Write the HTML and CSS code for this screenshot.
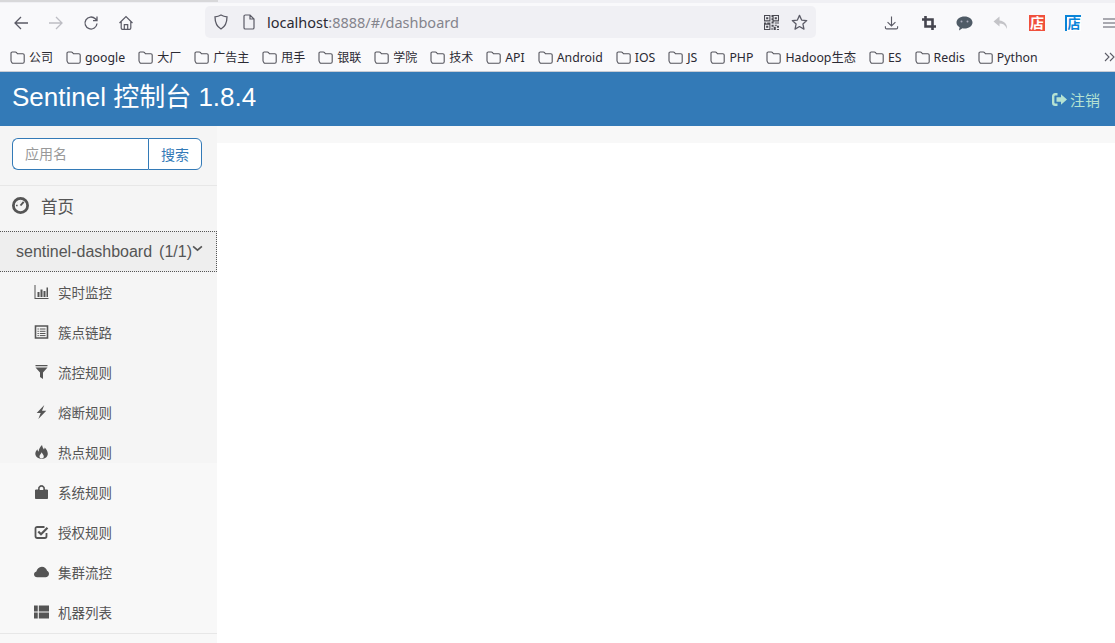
FILE: index.html
```html
<!DOCTYPE html>
<html lang="zh">
<head>
<meta charset="utf-8">
<title>Sentinel Dashboard</title>
<link rel="stylesheet" href="styles.css">
</head>
<body>
<svg class="defs" width="0" height="0" aria-hidden="true">
  <symbol id="folder" viewBox="0 0 15 13"><path d="M1 3V2.200C1 1.500 1.500 1 2.200 1h3.200c.4 0 .7.2 1 .5l1 1.200h5.400c.8 0 1.400.6 1.400 1.400v6.700c0 .8-.6 1.400-1.400 1.400H2.400C1.600 11.200 1 10.600 1 9.800z" fill="none" stroke="#54545c" stroke-width="1.100"/></symbol>
</svg>
<div class="browser">
  <div class="topstrip"><div class="tabshadow"></div></div>
  <div class="toolbar">
    <div class="nav-buttons">
      <svg class="tb-icon" viewBox="0 0 16 16"><path d="M15 8H2M8 2 2 8l6 6" fill="none" stroke="#5b5b66" stroke-width="1.300"/></svg>
      <svg class="tb-icon" viewBox="0 0 16 16"><path d="M1 8h13M8 2l6 6-6 6" fill="none" stroke="#bdbdc3" stroke-width="1.300"/></svg>
      <svg class="tb-icon" viewBox="0 0 16 16"><path d="M14 8.500A6 6 0 1 1 12.300 3.800L14 5.500M14 1.500V5.600H10" fill="none" stroke="#5b5b66" stroke-width="1.300"/></svg>
      <svg class="tb-icon" viewBox="0 0 16 16"><path d="M1.500 8 8 1.600 14.500 8M3.200 6.800V13c0 .8.500 1.300 1.300 1.300h7c.8 0 1.300-.5 1.300-1.300V6.800M6.300 14.200V9.700h3.400v4.500" fill="none" stroke="#5b5b66" stroke-width="1.200"/></svg>
    </div>
    <div class="urlbar">
      <svg class="url-shield" viewBox="0 0 16 16"><path d="M8 1c2 1.200 4 1.700 6 1.800 0 5.700-1.600 9.800-6 12.200C3.600 12.600 2 8.500 2 2.800 4 2.700 6 2.200 8 1z" fill="none" stroke="#5b5b66" stroke-width="1.300"/></svg>
      <svg class="url-page" viewBox="0 0 14 16"><path d="M2 2.300C2 1.600 2.600 1 3.300 1H8l4 4v8.700c0 .7-.6 1.300-1.300 1.300H3.300C2.600 15 2 14.400 2 13.700zM8 1v4h4" fill="none" stroke="#5b5b66" stroke-width="1.200"/></svg>
      <div class="url-text">localhost<span class="url-dim">:8888/#/dashboard</span></div>
      <svg class="url-qr" viewBox="0 0 14 14"><path d="M0 0h6v6H0zM1 1v4h4V1zM8 0h6v6H8zM9 1v4h4V1zM0 8h6v6H0zM1 9v4h4V9zM2 2h2v2H2zM10 2h2v2h-2zM2 10h2v2H2zM7 0h1v2H7zM7 3h1v2H7zM0 7h2v1H0zM3 7h3v1H3zM7 6h2v2H7zM10 7h4v1h-4zM7 9h2v2H7zM10 9h2v1h-2zM12 10h2v2h-2zM9 11h2v3H9zM7 12h1v2H7zM12 13h2v1h-2z" fill="#4a4a52" fill-rule="evenodd"/></svg>
      <svg class="url-star" viewBox="0 0 16 16"><path d="m8 1.300 2 4.400 4.800.5-3.600 3.200 1 4.800L8 11.800l-4.200 2.400 1-4.800L1.200 6.200 6 5.700z" fill="none" stroke="#5b5b66" stroke-width="1.200" stroke-linejoin="round"/></svg>
    </div>
    <div class="ext-buttons">
      <svg class="ext dl" viewBox="0 0 16 16"><path d="M8 1v10M3.800 7 8 11.200 12.200 7M1.500 11.500V13c0 .8.500 1.300 1.300 1.300h10.400c.8 0 1.300-.5 1.300-1.300v-1.500" fill="none" stroke="#5b5b66" stroke-width="1.200"/></svg>
      <svg class="ext crop" viewBox="0 0 14 14"><path d="M3.500 0v10.500H14M0 3.500h10.500V14" fill="none" stroke="#45454f" stroke-width="2.600"/></svg>
      <svg class="ext chat" viewBox="0 0 17 15"><path d="M8.500 0.500c4.500 0 8 2.600 8 6s-3.500 6-8 6c-.7 0-1.400-.1-2-.2L3 14.500l.6-3.300C1.600 10.100.5 8.400.5 6.500c0-3.400 3.500-6 8-6z" fill="#4f5b66"/><circle cx="5.500" cy="5.500" r="1" fill="#aab"/><circle cx="11.500" cy="5.500" r="1" fill="#aab"/></svg>
      <svg class="ext back" viewBox="0 0 15 14"><path d="M6.500 0.500.5 5.500l6 5V7.500c3 0 5 1 6.500 3.500l1 2c.5-4.500-2.500-8-7.500-8.500z" fill="#c4c4c8"/></svg>
      <div class="ext shop red">店</div>
      <div class="ext shop blue">店</div>
      <svg class="ext menu" viewBox="0 0 12 10"><path d="M0 1h12M0 5h12M0 9h12" stroke="#5b5b66" stroke-width="1.100"/></svg>
    </div>
  </div>
  <div class="bookmarks">
    <div class="bm zh"><svg class="bm-icon"><use href="#folder"/></svg>公司</div>
    <div class="bm"><svg class="bm-icon"><use href="#folder"/></svg>google</div>
    <div class="bm zh"><svg class="bm-icon"><use href="#folder"/></svg>大厂</div>
    <div class="bm zh"><svg class="bm-icon"><use href="#folder"/></svg>广告主</div>
    <div class="bm zh"><svg class="bm-icon"><use href="#folder"/></svg>甩手</div>
    <div class="bm zh"><svg class="bm-icon"><use href="#folder"/></svg>银联</div>
    <div class="bm zh"><svg class="bm-icon"><use href="#folder"/></svg>学院</div>
    <div class="bm zh"><svg class="bm-icon"><use href="#folder"/></svg>技术</div>
    <div class="bm"><svg class="bm-icon"><use href="#folder"/></svg>API</div>
    <div class="bm"><svg class="bm-icon"><use href="#folder"/></svg>Android</div>
    <div class="bm"><svg class="bm-icon"><use href="#folder"/></svg>IOS</div>
    <div class="bm"><svg class="bm-icon"><use href="#folder"/></svg>JS</div>
    <div class="bm"><svg class="bm-icon"><use href="#folder"/></svg>PHP</div>
    <div class="bm"><svg class="bm-icon"><use href="#folder"/></svg>Hadoop生态</div>
    <div class="bm"><svg class="bm-icon"><use href="#folder"/></svg>ES</div>
    <div class="bm"><svg class="bm-icon"><use href="#folder"/></svg>Redis</div>
    <div class="bm"><svg class="bm-icon"><use href="#folder"/></svg>Python</div>
    <svg class="bm-more" viewBox="0 0 11 10"><path d="M1 1l4 4-4 4M6 1l4 4-4 4" fill="none" stroke="#5b5b66" stroke-width="1.100"/></svg>
  </div>
</div>
<header class="navbar">
  <div class="brand">Sentinel 控制台 1.8.4</div>
  <a class="logout">
    <svg class="logout-icon" viewBox="0 0 15 13"><path d="M5.500 1.200H3.200C2 1.200 1.200 2 1.200 3.200v6.600c0 1.200.8 2 2 2h2.300" fill="none" stroke="#b5e2d2" stroke-width="2.400"/><path d="M4.500 4.300H9V1.200L15 6.500 9 11.800V8.700H4.500z" fill="#b5e2d2"/></svg>注销
  </a>
</header>
<div class="main">
  <aside class="sidebar">
    <div class="search-wrap">
      <form class="search">
        <input class="search-input" placeholder="应用名">
        <button class="search-btn" type="button">搜索</button>
      </form>
    </div>
    <div class="home">
      <svg class="home-icon" viewBox="0 0 16 16"><circle cx="8" cy="8" r="6.700" fill="none" stroke="#555" stroke-width="2.600"/><path d="M8 8l3-3.500" stroke="#555" stroke-width="1.800"/><path d="M3.800 8h1.500M8 4h.1M5 5.200h.1" stroke="#555" stroke-width="1.400"/></svg>
      <span>首页</span>
    </div>
    <div class="app-row">
      <span>sentinel-dashboard</span><span class="app-count">(1/1)</span>
      <svg class="chev" viewBox="0 0 10 6"><path d="M1 1l4 3.500L9 1" fill="none" stroke="#555" stroke-width="1.500"/></svg>
    </div>
    <ul class="menu-list">
      <li class="menu-item"><svg class="mi" viewBox="0 0 14 14"><path d="M0 0h1v13h13v1H0zM3 7h2v5H3zM6 4.500h2V12H6zM9 6h2v6H9zM12 2.500h1.500V12H12z" fill="#555"/></svg>实时监控</li>
      <li class="menu-item"><svg class="mi" viewBox="0 0 14 14"><path d="M1 1h12v12H1z" fill="none" stroke="#555" stroke-width="1.600"/><path d="M3 4h1.300M5.300 4H11M3 6.300h1.300M5.300 6.300H11M3 8.500h1.300M5.300 8.500H11M3 10.600h1.300M5.300 10.600H11" stroke="#555" stroke-width="1"/></svg>簇点链路</li>
      <li class="menu-item"><svg class="mi" viewBox="0 0 14 14"><path d="M1 0h12v1.300H1zM1 2.500h12L8.500 7.500V14L5.500 12V7.500z" fill="#555"/></svg>流控规则</li>
      <li class="menu-item"><svg class="mi" viewBox="0 0 14 14"><path d="M9.800 0 2.200 8h4L3.800 14l8-8.200H7.500z" fill="#555"/></svg>熔断规则</li>
      <li class="menu-item"><svg class="mi" viewBox="0 0 14 14"><path d="M7.500 0c.6 2.500 1 3.200 2 4.500.4-.6.6-1.200.6-2 1.700 1.500 3.200 3.800 3.200 6.300 0 3-2.700 5.200-5.800 5.200C4 14 .8 11.800.8 8.800c0-1.900 1-3.500 2.200-4.600.1 1.100.4 1.800 1.200 2.400C4.200 4.200 5.500 2 7.500 0zM7.200 7.200C6.800 8.600 5 9.600 5 11.400c0 1.200 1 2 2.200 2s2.100-.8 2.100-2c0-1.800-1.700-2.600-2.100-4.200z" fill="#555" fill-rule="evenodd"/></svg>热点规则</li>
      <li class="menu-item"><svg class="mi" viewBox="0 0 14 14"><path d="M4 5V3.500C4 1.700 5.300.5 7 .5s3 1.200 3 3V5M1 5h12v8.500H1z" fill="#555" stroke="#555"/><path d="M5.200 5V3.600c0-1 .8-1.800 1.800-1.800s1.800.8 1.800 1.800V5z" fill="#f8f8f8"/></svg>系统规则</li>
      <li class="menu-item"><svg class="mi" viewBox="0 0 14 14"><path d="M12 8v3.300c0 1-.7 1.700-1.700 1.700H2.700C1.700 13 1 12.300 1 11.300V3.700C1 2.700 1.700 2 2.700 2H10" fill="none" stroke="#555" stroke-width="1.800"/><path d="M3.800 6.500 6.500 9.200 13 2.700" fill="none" stroke="#555" stroke-width="2.200"/></svg>授权规则</li>
      <li class="menu-item"><svg class="mi" viewBox="0 0 14 10"><path d="M3 10C1.300 10 0 8.800 0 7.200 0 5.900.9 4.800 2.200 4.500 2.700 2 4.700 0 7.300 0c2.400 0 4.400 1.600 4.900 3.800 1 .4 1.800 1.500 1.800 2.800C14 8.500 12.500 10 10.700 10z" fill="#555"/></svg>集群流控</li>
      <li class="menu-item"><svg class="mi" viewBox="0 0 14 12"><path d="M0 0h3.500v5.500H0zM4.500 0H14v5.500H4.500zM0 6.500h3.500V12H0zM4.500 6.500H14V12H4.500z" fill="#555"/></svg>机器列表</li>
    </ul>
  </aside>
  <main class="content">
    <div class="content-strip"></div>
  </main>
</div>
</body>
</html>
```
FILE: styles.css
```css
* { box-sizing: border-box; }
html, body { margin: 0; height: 100%; overflow: hidden; }
body {
  display: flex;
  flex-direction: column;
  width: 1115px;
  height: 643px;
  font-family: "Liberation Sans", "Noto Sans CJK SC", sans-serif;
  color: #555;
  background: #fff;
}
.defs { display: block; height: 0; }

.browser {
  height: 72px;
  flex: none;
  background: #f9f9fb;
  border-bottom: 1px solid #c8ccd4;
}
.topstrip { height: 3px; background: #f0f0f4; }
.tabshadow { width: 218px; height: 2px; background: #d8d8da; }
.toolbar {
  display: flex;
  align-items: center;
  height: 38px;
  padding-left: 13px;
}
.nav-buttons { display: flex; align-items: center; gap: 19px; width: 192px; flex: none; margin-top: 2px; }
.tb-icon { width: 16px; height: 16px; flex: none; }
.urlbar {
  display: flex;
  align-items: center;
  width: 611px;
  height: 32px;
  flex: none;
  background: #f0f0f4;
  border-radius: 5px;
  padding: 0 8px;
}
.url-shield { width: 16px; height: 16px; flex: none; }
.url-page { width: 14px; height: 16px; flex: none; margin-left: 13px; }
.url-text {
  margin-left: 11px;
  flex: 1;
  font-family: "Noto Sans", "Liberation Sans", sans-serif;
  font-size: 14.500px;
  color: #2b2a33;
}
.url-dim { color: #84848c; }
.url-qr { width: 15px; height: 15px; flex: none; margin-right: 12px; }
.url-star { width: 17px; height: 17px; flex: none; }
.ext-buttons { display: flex; align-items: center; flex: 1; margin-left: 68px; margin-top: 2px; }
.ext { flex: none; }
.dl { width: 15px; height: 16px; }
.crop { width: 14px; height: 14px; margin-left: 23px; }
.chat { width: 17px; height: 15px; margin-left: 20px; }
.back { width: 15px; height: 14px; margin-left: 20px; }
.shop {
  width: 16px;
  height: 16px;
  margin-left: 21px;
  font-size: 14px;
  font-weight: bold;
  line-height: 16px;
  text-align: center;
  color: #fff;
  overflow: hidden;
}
.red { background: #f0503c; }
.blue { background: #fff; color: #0a84d8; margin-left: 20px; border-left: 2px solid #0a84d8; border-top: 2px solid #0a84d8; line-height: 14px; font-size: 13px; }
.menu { width: 12px; height: 10px; margin-left: 22px; }

.bookmarks {
  display: flex;
  align-items: center;
  height: 30px;
  padding: 2px 0 0 10px;
  gap: 13px;
  font-family: "Noto Sans", "Noto Sans CJK SC", sans-serif;
  font-size: 12.300px;
  color: #2b2a33;
  white-space: nowrap;
}
.bm { display: flex; align-items: center; gap: 4px; flex: none; }
.zh { font-size: 12px; }
.bm-icon { width: 15px; height: 13px; flex: none; }
.bm-more { width: 11px; height: 10px; margin-left: auto; flex: none; }

.navbar {
  flex: none;
  height: 54px;
  display: flex;
  align-items: center;
  justify-content: space-between;
  padding: 0 15px 0 12px;
  background: #337ab7;
}
.brand { font-size: 26px; color: #fff; line-height: 50px; margin-top: -5px; }
.logout {
  display: flex;
  align-items: center;
  gap: 3px;
  font-size: 15px;
  color: #b5e2d2;
  margin-top: 1px;
}
.logout-icon { width: 15px; height: 13px; }

.main { flex: 1; display: flex; min-height: 0; }
.sidebar {
  width: 217px;
  flex: none;
  background: linear-gradient(#f5f5f5 337px, #f8f8f8 337px);
}
.search-wrap { height: 60px; padding: 12px 15px 0 12px; border-bottom: 1px solid #e7e7e7; }
.search { display: flex; height: 32px; margin: 0; }
.search-input {
  width: 136px;
  height: 32px;
  padding: 0 12px;
  font: 14px "Liberation Sans", "Noto Sans CJK SC", sans-serif;
  color: #555;
  background: #fff;
  border: 1px solid #337ab7;
  border-right: 0;
  border-radius: 6px 0 0 6px;
  outline: 0;
}
.search-input::placeholder { color: #999; }
.search-btn {
  width: 54px;
  height: 32px;
  padding: 0;
  font: 14px "Liberation Sans", "Noto Sans CJK SC", sans-serif;
  color: #337ab7;
  background: #fff;
  border: 1px solid #337ab7;
  border-radius: 0 6px 6px 0;
}
.home {
  display: flex;
  align-items: center;
  gap: 12px;
  height: 45px;
  padding: 0 0 6px 12px;
  font-size: 16.500px;
}
.home-icon { width: 17px; height: 17px; flex: none; }
.app-row {
  display: flex;
  align-items: center;
  height: 41px;
  padding-left: 16px;
  font-size: 16px;
  background: #eee;
  border: 1px dotted #555;
  border-left: 0;
  white-space: nowrap;
}
.app-count { margin-left: 7px; }
.chev { width: 11px; height: 7px; margin-bottom: 6px; flex: none; }
.menu-list {
  list-style: none;
  margin: 1px 0 0;
  padding: 0;
  border-bottom: 1px solid #e7e7e7;
}
.menu-item {
  display: flex;
  align-items: center;
  height: 40px;
  padding: 0 0 2px 34px;
  font-size: 13.500px;
}
.mi { width: 15px; height: 14px; margin-right: 9px; flex: none; }

.content { flex: 1; background: #fff; }
.content-strip { height: 17px; background: #f8f8f8; }
```
